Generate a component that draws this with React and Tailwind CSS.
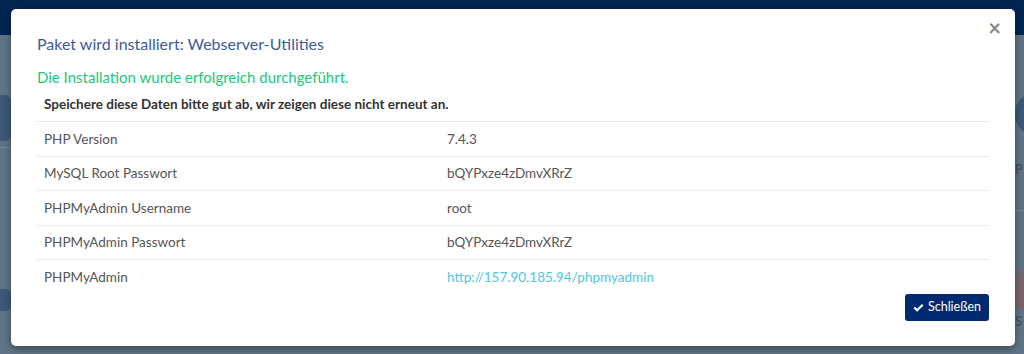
import React from "react";

const rows = [
  ["PHP Version", "7.4.3"],
  ["MySQL Root Passwort", "bQYPxze4zDmvXRrZ"],
  ["PHPMyAdmin Username", "root"],
  ["PHPMyAdmin Passwort", "bQYPxze4zDmvXRrZ"],
];

export default function App() {
  return (
    <div
      className="relative w-[1024px] h-[354px] overflow-hidden bg-[#5f7587]"
      style={{ fontFamily: "Lato, 'Liberation Sans', sans-serif" }}
    >
      {/* page behind overlay */}
      <div className="h-[35px] bg-[#002652]" />
      <div className="flex justify-between h-[319px]">
        <div className="flex flex-col w-[11px] pt-[60px]">
          <div className="ml-[-6px] w-[17px] h-[46px] rounded-[6px] bg-[#3e5a78]" />
          <div className="mt-[6px] h-px bg-[#71879a]" />
          <div className="mt-[141px] ml-[-6px] w-[17px] h-[22px] rounded-[6px] bg-[#3e5a78]" />
        </div>
        <div className="flex flex-col items-start w-[9px] pt-[58px]">
          <div className="w-[40px] h-[42px] rounded-full bg-[#3d5a7a]" />
          <div className="mt-[26px] text-[13px] leading-[16px] text-[#3a5068]">P</div>
          <div className="mt-[33px] w-[9px] h-px bg-[#71879a]" />
          <div className="mt-[56px] w-[30px] h-[46px] rounded-full bg-[#7a6670]" />
          <div className="text-[13px] leading-[16px] text-[#3a5068]">S</div>
        </div>
      </div>

      {/* modal */}
      <div className="absolute left-[11px] top-[9px] w-[1004px] h-[337px] rounded-[5px] bg-white shadow-[0_3px_9px_rgba(0,0,0,0.4)] px-[26px]">
        <button className="absolute right-[14px] top-[8px] text-[22px] leading-none text-[#888] font-bold">
          ×
        </button>
        <div className="pt-[25px] text-[16px] leading-[20px] text-[#3d5b99]">
          Paket wird installiert: Webserver-Utilities
        </div>
        <div className="mt-[13px] text-[15px] leading-[20px] text-[#22c77c]">
          Die Installation wurde erfolgreich durchgeführt.
        </div>
        <div className="mt-[4px] h-[31px] pb-[4px] px-[7px] flex items-center text-[13.5px] font-bold text-[#333] border-b border-[#e6e6e6]">
          Speichere diese Daten bitte gut ab, wir zeigen diese nicht erneut an.
        </div>
        {rows.map(([k, v]) => (
          <div
            key={k}
            className="h-[34.5px] flex items-center text-[13.5px] text-[#555] border-b border-[#ececec]"
          >
            <div className="w-[410px] pl-[7px]">{k}</div>
            <div>{v}</div>
          </div>
        ))}
        <div className="h-[34px] flex items-center text-[13.5px] text-[#555]">
          <div className="w-[410px] pl-[7px]">PHPMyAdmin</div>
          <div className="text-[#4fc6dd]">http://157.90.185.94/phpmyadmin</div>
        </div>
        <div className="flex justify-end">
          <button className="h-[27px] w-[84px] rounded-[3px] bg-[#002a70] text-white text-[12.5px] flex items-center justify-center gap-[4px]">
            <svg width="11" height="10" viewBox="0 0 12 10" fill="white">
              <path d="M0.5 5.2 L2.2 3.5 L4.5 5.8 L9.8 0.5 L11.5 2.2 L4.5 9.2 Z" />
            </svg>
            Schließen
          </button>
        </div>
      </div>
    </div>
  );
}
